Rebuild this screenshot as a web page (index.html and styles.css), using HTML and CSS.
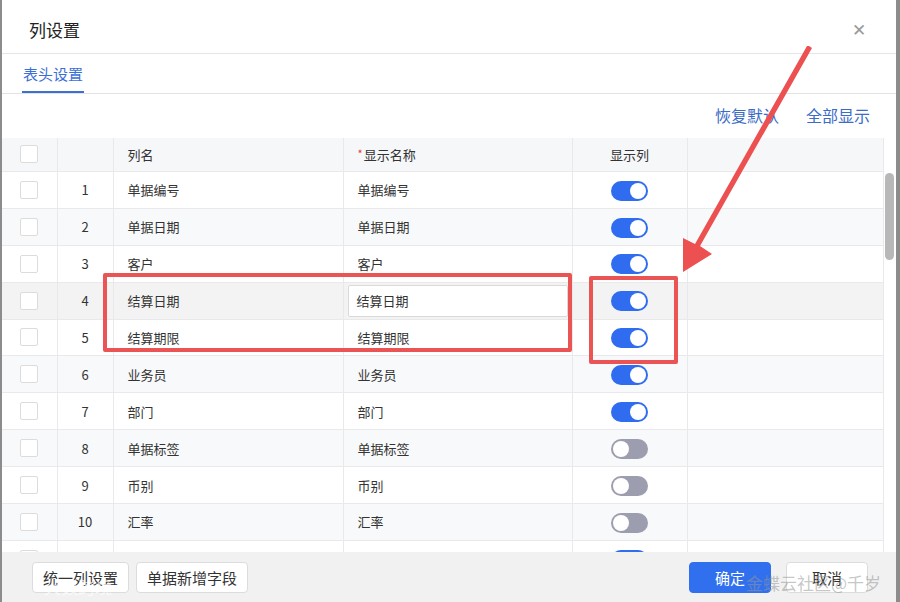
FILE: index.html
```html
<!DOCTYPE html>
<html lang="zh-CN">
  <head>
    <meta charset="UTF-8" />
    <title>列设置</title>
    <link rel="stylesheet" href="styles.css">
  </head>
  <body>
    <div class="dialog">
      <div class="dialog-head">
        <span class="dialog-title">列设置</span>
        <span class="close">&#x2715;</span>
      </div>
      <div class="tabs">
        <span class="tab active">表头设置</span>
      </div>
      <div class="toolbar">
        <a class="link">恢复默认</a>
        <a class="link">全部显示</a>
      </div>

      <div class="grid-wrap">
        <table class="grid">
          <colgroup>
            <col class="c-check" />
            <col class="c-index" />
            <col class="c-name" />
            <col class="c-show" />
            <col class="c-toggle" />
            <col />
          </colgroup>
          <thead>
            <tr>
              <th><span class="box"></span></th>
              <th></th>
              <th class="left">列名</th>
              <th class="left"><span class="req">*</span>显示名称</th>
              <th>显示列</th>
              <th></th>
            </tr>
          </thead>
          <tbody>
            <tr>
              <td><span class="box"></span></td><td>1</td>
              <td class="left">单据编号</td><td class="left">单据编号</td>
              <td><span class="switch on"></span></td><td></td>
            </tr>
            <tr>
              <td><span class="box"></span></td><td>2</td>
              <td class="left">单据日期</td><td class="left">单据日期</td>
              <td><span class="switch on"></span></td><td></td>
            </tr>
            <tr>
              <td><span class="box"></span></td><td>3</td>
              <td class="left">客户</td><td class="left">客户</td>
              <td><span class="switch on"></span></td><td></td>
            </tr>
            <tr class="hover">
              <td><span class="box"></span></td><td>4</td>
              <td class="left">结算日期</td>
              <td class="edit"><span class="input">结算日期</span></td>
              <td><span class="switch on"></span></td><td></td>
            </tr>
            <tr>
              <td><span class="box"></span></td><td>5</td>
              <td class="left">结算期限</td><td class="left">结算期限</td>
              <td><span class="switch on"></span></td><td></td>
            </tr>
            <tr>
              <td><span class="box"></span></td><td>6</td>
              <td class="left">业务员</td><td class="left">业务员</td>
              <td><span class="switch on"></span></td><td></td>
            </tr>
            <tr>
              <td><span class="box"></span></td><td>7</td>
              <td class="left">部门</td><td class="left">部门</td>
              <td><span class="switch on"></span></td><td></td>
            </tr>
            <tr>
              <td><span class="box"></span></td><td>8</td>
              <td class="left">单据标签</td><td class="left">单据标签</td>
              <td><span class="switch"></span></td><td></td>
            </tr>
            <tr>
              <td><span class="box"></span></td><td>9</td>
              <td class="left">币别</td><td class="left">币别</td>
              <td><span class="switch"></span></td><td></td>
            </tr>
            <tr>
              <td><span class="box"></span></td><td>10</td>
              <td class="left">汇率</td><td class="left">汇率</td>
              <td><span class="switch"></span></td><td></td>
            </tr>
            <!-- 第11行被底部按钮栏盖住，只露出顶部 -->
            <tr>
              <td><span class="box"></span></td><td></td>
              <td></td><td></td>
              <td><span class="switch on"></span></td><td></td>
            </tr>
          </tbody>
        </table>
        <div class="scrollbar"><div class="thumb"></div></div>
      </div>

      <div class="dialog-foot">
        <div class="foot-left">
          <button class="btn">统一列设置</button>
          <button class="btn">单据新增字段</button>
        </div>
        <div class="foot-right">
          <button class="btn primary">确定</button>
          <button class="btn">取消</button>
        </div>
      </div>
    </div>

    <!-- red annotations drawn over the screenshot -->
    <div class="mark mark-rows"></div>
    <div class="mark mark-switch"></div>
    <svg class="arrow" width="900" height="602" viewBox="0 0 900 602">
      <path d="M809 46 L812 48 L700 246 L712 254 L683 272 L683 238 L695 244 L807 46 Z" fill="#ec5050" />
    </svg>

    <div class="watermark wm-right">金蝶云社区@千岁</div>
    <div class="watermark wm-left">大数跨境</div>
  </body>
</html>
```

FILE: styles.css
```css
body {
  margin: 0;
  padding: 0 0 0 2px;
  background-color: #8c8c8c;
  font-family: "Noto Sans CJK SC", "Noto Sans", sans-serif;
  color: #333;
  width: 900px;
  height: 602px;
  overflow: hidden;
  position: relative;
}

.dialog {
  width: 894px;
  height: 602px;
  background-color: #fff;
  display: flex;
  flex-direction: column;
}

.dialog-head {
  height: 54px;
  flex: none;
  display: flex;
  align-items: center;
  justify-content: space-between;
  padding: 6px 30px 0 27px;
  border-bottom: 1px solid #e6e6e6;
  box-sizing: border-box;
}

.dialog-title {
  font-size: 17px;
  color: #222;
}

.close {
  font-size: 17px;
  color: #9a9a9a;
  margin-top: -2px;
}

.tabs {
  height: 40px;
  flex: none;
  padding-left: 20px;
  border-bottom: 1px solid #e3e3e3;
  box-sizing: border-box;
  display: flex;
  align-items: flex-end;
}

.tab {
  font-size: 15px;
  color: #3c6fd6;
  padding: 0 1px 3px;
  border-bottom: 2px solid #3c6fd6;
  line-height: 29px;
}

.toolbar {
  height: 44px;
  flex: none;
  display: flex;
  justify-content: flex-end;
  align-items: center;
  gap: 27px;
  padding: 0 26px 0 0;
}

.link {
  font-size: 16px;
  color: #3a6cc8;
  margin-top: -3px;
}

/* 表格区域，超出部分被底部按钮栏遮住 */
.grid-wrap {
  flex: 1;
  display: flex;
  overflow: hidden;
  min-height: 0;
}

.grid {
  width: 882px;
  flex: none;
  border-collapse: collapse;
  table-layout: fixed;
  font-size: 13px;
}

.c-check { width: 55px; }
.c-index { width: 56px; }
.c-name { width: 230px; }
.c-show { width: 229px; }
.c-toggle { width: 115px; }

.grid th,
.grid td {
  border: 1px solid #e9e9eb;
  text-align: center;
  padding: 0;
  font-weight: normal;
}

.grid tr > :first-child {
  border-left: 0;
}

.grid th {
  height: 33px;
  background-color: #f6f7f9;
  color: #333;
  border-top: 0;
}

.grid td {
  height: 35.9px;
}

.grid .left {
  text-align: left;
  padding-left: 14px;
}

.grid tbody tr:nth-child(even) {
  background-color: #f8f9fa;
}

.grid tbody tr.hover {
  background-color: #f3f3f4;
}

.req {
  color: #e23a3a;
  font-size: 11px;
  vertical-align: top;
  margin-right: 1px;
}

.box {
  display: inline-block;
  width: 16px;
  height: 16px;
  border: 1px solid #dcdcdc;
  border-radius: 2px;
  background-color: #fff;
  vertical-align: middle;
  margin-top: -4px;
}

.grid td.edit {
  padding: 0 4px;
}

.input {
  display: flex;
  align-items: center;
  height: 30px;
  padding-left: 8px;
  border: 1px solid #dadada;
  border-radius: 2px;
  background-color: #fff;
}

.switch {
  display: inline-block;
  position: relative;
  width: 37px;
  height: 20px;
  border-radius: 10px;
  background-color: #9d9db0;
  vertical-align: middle;
}

.switch::after {
  content: "";
  position: absolute;
  top: 2px;
  left: 2px;
  width: 16px;
  height: 16px;
  border-radius: 50%;
  background-color: #fff;
}

.switch.on {
  background-color: #2f6cf0;
}

.switch.on::after {
  left: 19px;
}

.scrollbar {
  width: 12px;
  flex: none;
  background-color: #fff;
  padding: 35px 2px 0 0;
  box-sizing: border-box;
}

.thumb {
  width: 9px;
  height: 87px;
  margin-left: 1px;
  border-radius: 5px;
  background-color: #b8b8b8;
}

.dialog-foot {
  height: 50px;
  flex: none;
  background-color: #f1f1f1;
  display: flex;
  justify-content: space-between;
  align-items: center;
  padding: 0 28px 0 30px;
}

.foot-left,
.foot-right {
  display: flex;
  gap: 7px;
}

.foot-right {
  gap: 15px;
}

.btn {
  height: 31px;
  padding: 0 10px;
  font-family: inherit;
  font-size: 15px;
  color: #333;
  background-color: #fff;
  border: 1px solid #dcdcdc;
  border-radius: 4px;
}

.foot-right .btn {
  width: 82px;
}

.btn.primary {
  background-color: #3070ee;
  border-color: #3070ee;
  color: #fff;
}

.mark {
  position: absolute;
  border: 4px solid #ea5455;
  border-radius: 2px;
  box-sizing: border-box;
}

.mark-rows {
  left: 103px;
  top: 273px;
  width: 469px;
  height: 79px;
}

.mark-switch {
  left: 589px;
  top: 276px;
  width: 89px;
  height: 88px;
}

.arrow {
  position: absolute;
  left: 0;
  top: 0;
}

.watermark {
  position: absolute;
  font-size: 17px;
  color: rgba(150, 150, 150, 0.55);
}

.wm-right {
  left: 746px;
  top: 570px;
}

.wm-left {
  left: 44px;
  top: 574px;
  color: rgba(255, 255, 255, 0.7);
}
```
